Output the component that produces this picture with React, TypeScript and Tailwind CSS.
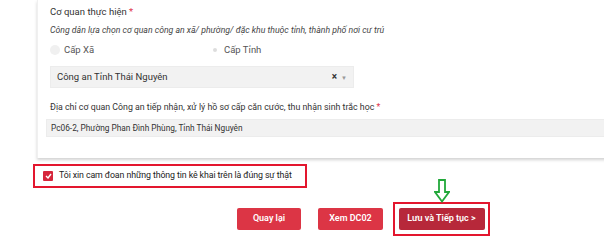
import React from "react";

export default function App() {
  return (
    <div className="w-[604px] h-[245px] bg-white overflow-hidden text-[#333]" style={{ fontFamily: "Roboto, 'Liberation Sans', sans-serif" }}>
      <div className="ml-[37px] w-[600px] h-[158px] bg-white border-l border-[#f0f0f0] shadow-[0_2px_3px_rgba(0,0,0,0.18)] pl-[12px] pt-[4px]">
        <div className="text-[9.5px] leading-[16px]">
          Cơ quan thực hiện <span className="text-[#e0334c]">*</span>
        </div>
        <div className="mt-[3px] text-[8.7px] leading-[14px] italic text-[#444] whitespace-nowrap">
          Công dân lựa chọn cơ quan công an xã/ phường/ đặc khu thuộc tỉnh, thành phố nơi cư trú
        </div>
        <div className="mt-[5px] flex items-center h-[16px] text-[9.5px] text-[#555]">
          <div className="flex items-center w-[160px]">
            <span className="w-[10px] h-[10px] rounded-full bg-[#f0f0f0] mr-[4px]" />
            <span>Cấp Xã</span>
          </div>
          <div className="flex items-center">
            <span className="w-[10px] h-[10px] rounded-full bg-white mr-[4px] flex items-center justify-center">
              <span className="w-[4px] h-[4px] rounded-full bg-[#ddd]" />
            </span>
            <span>Cấp Tỉnh</span>
          </div>
        </div>
        <div className="mt-[8px] w-[304px] h-[22px] bg-[#f2f2f2] border border-[#ececec] flex items-center px-[6px] text-[9.5px]">
          <span className="flex-1">Công an Tỉnh Thái Nguyên</span>
          <span className="text-[10px] font-bold text-[#333] mr-[4px] leading-none">×</span>
          <span className="text-[6px] text-[#999]">▼</span>
        </div>
        <div className="mt-[12px] text-[8.8px] leading-[14px] whitespace-nowrap">
          Địa chỉ cơ quan Công an tiếp nhận, xử lý hồ sơ cấp căn cước, thu nhận sinh trắc học <span className="text-[#e0334c]">*</span>
        </div>
        <div className="mt-[5px] -ml-[4px] h-[18px] bg-[#f2f2f2] border border-[#ececec] flex items-center px-[4px] text-[8.3px]">
          Pc06-2, Phường Phan Đình Phùng, Tỉnh Thái Nguyên
        </div>
      </div>
      <div className="relative">
        <div className="ml-[33px] mt-[6px] w-[274px] h-[24px] border-2 border-[#e3162e] flex items-center pl-[8px] whitespace-nowrap">
          <span className="w-[10px] h-[10px] shrink-0 bg-[#d6263c] rounded-[1px] flex items-center justify-center mr-[6px]">
            <svg width="7" height="6" viewBox="0 0 7 6"><path d="M1 3 L3 5 L6 1" stroke="white" strokeWidth="1.4" fill="none" /></svg>
          </span>
          <span className="text-[8.8px] text-[#222] tracking-[-0.1px]">Tôi xin cam đoan những thông tin kê khai trên là đúng sự thật</span>
        </div>
        <svg className="absolute left-[434px] top-[15px]" width="16" height="24" viewBox="0 0 16 24">
          <path d="M5 1 H11 V13 H15 L8 22.5 L1 13 H5 Z" fill="white" stroke="#22a83a" strokeWidth="1.8" strokeLinejoin="miter" />
        </svg>
        <div className="flex items-center mt-[14px] ml-[237px]">
          <button className="w-[64px] h-[22px] bg-[#dc3545] text-white text-[9px] font-semibold rounded-[2px]">Quay lại</button>
          <button className="w-[65px] h-[22px] ml-[17px] bg-[#dc3545] text-white text-[9px] font-semibold rounded-[2px]">Xem DC02</button>
          <div className="ml-[10px] w-[97px] h-[34px] border-2 border-[#e3162e] flex items-center justify-center">
            <button className="w-[86px] h-[22px] bg-[#b7283a] text-white text-[9px] font-semibold rounded-[2px]">Lưu và Tiếp tục &gt;</button>
          </div>
        </div>
      </div>
    </div>
  );
}
